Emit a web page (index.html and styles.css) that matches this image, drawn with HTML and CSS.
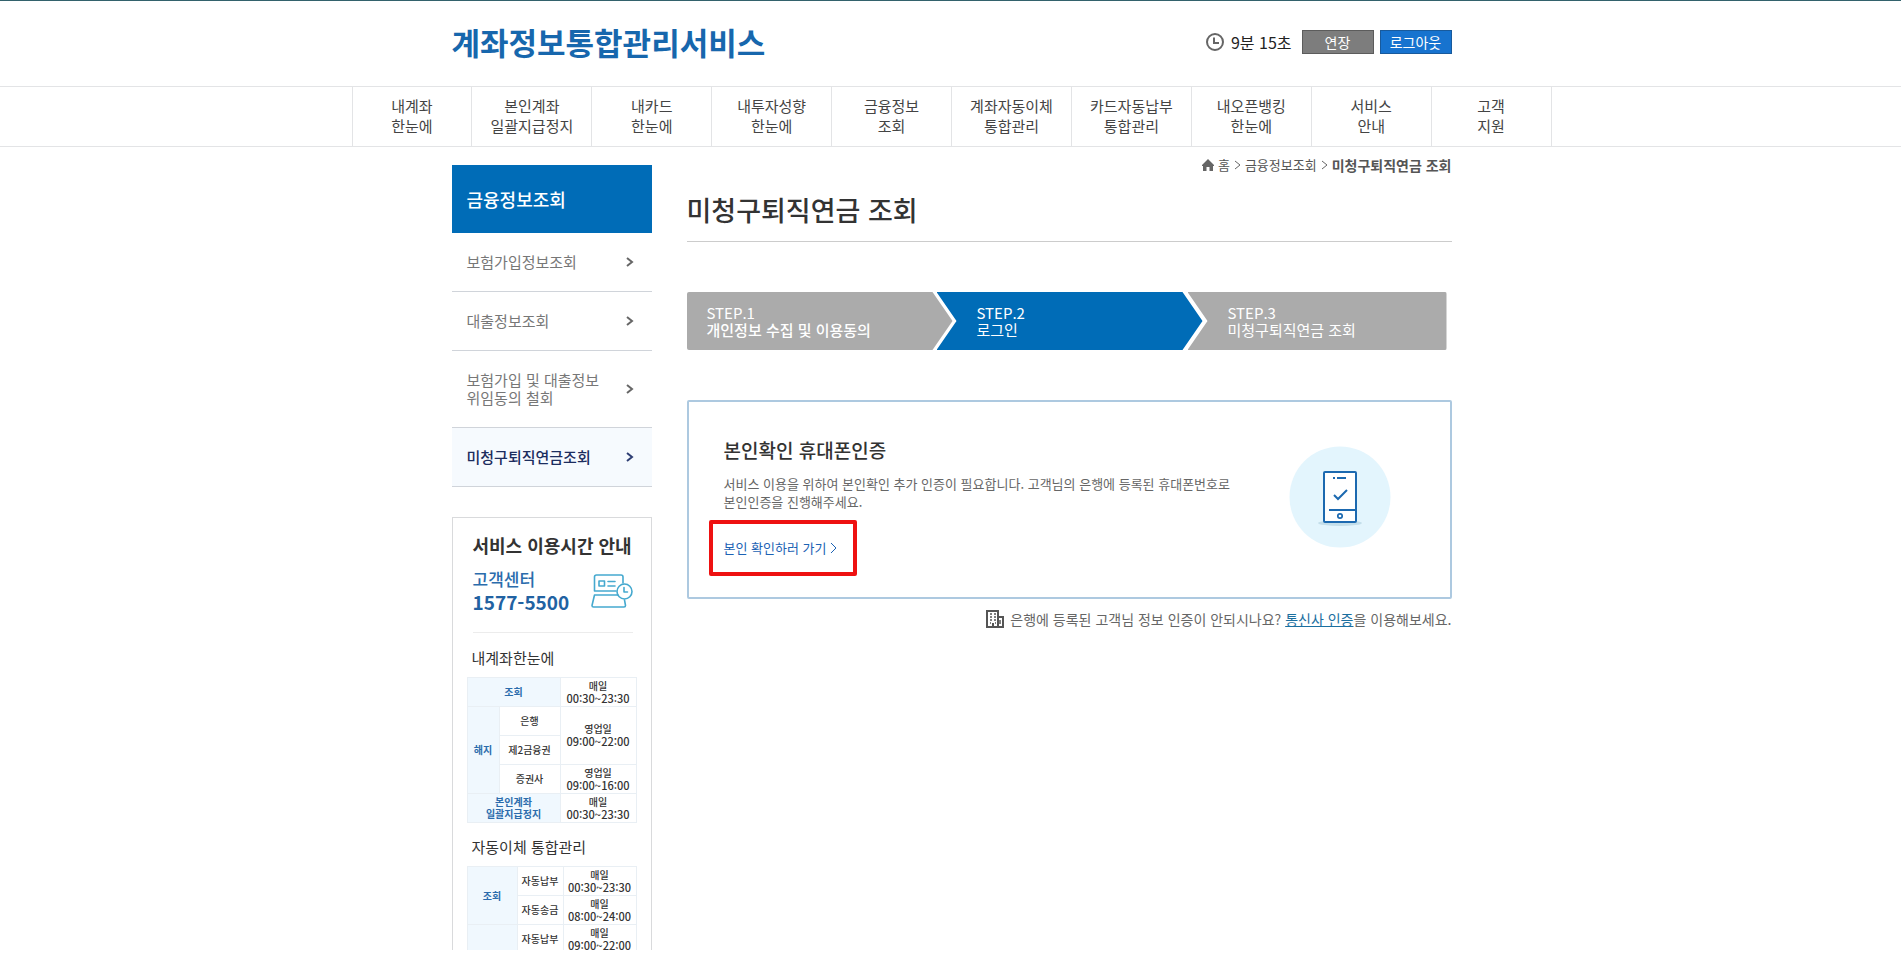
FILE: index.html
```html
<!DOCTYPE html>
<html lang="ko">
<head>
<meta charset="utf-8">
<meta name="viewport" content="width=device-width, initial-scale=1">
<title>미청구퇴직연금 조회</title>
<link rel="stylesheet" href="styles.css">
</head>
<body>
<div class="page">
  <header class="header">
    <div class="wrap header-row">
      <a class="logo" href="#">계좌정보통합관리서비스</a>
      <div class="session">
        <svg class="clock" width="20" height="20" viewBox="0 0 20 20" fill="none" stroke="#666" aria-hidden="true"><circle cx="10" cy="10" r="8" stroke-width="2"/><path d="M9 5.5V11h5" stroke-width="2"/></svg>
        <span class="time">9분 15초</span>
        <button class="btn btn-extend" type="button">연장</button>
        <button class="btn btn-logout" type="button">로그아웃</button>
      </div>
    </div>
  </header>
  <nav class="gnb">
    <ul class="gnb-list">
      <li><a href="#">내계좌<br>한눈에</a></li>
      <li><a href="#">본인계좌<br>일괄지급정지</a></li>
      <li><a href="#">내카드<br>한눈에</a></li>
      <li><a href="#">내투자성향<br>한눈에</a></li>
      <li><a href="#">금융정보<br>조회</a></li>
      <li><a href="#">계좌자동이체<br>통합관리</a></li>
      <li><a href="#">카드자동납부<br>통합관리</a></li>
      <li><a href="#">내오픈뱅킹<br>한눈에</a></li>
      <li><a href="#">서비스<br>안내</a></li>
      <li><a href="#">고객<br>지원</a></li>
    </ul>
  </nav>
  <div class="wrap body-grid">
    <aside class="side">
      <h2 class="side-title">금융정보조회</h2>
      <ul class="side-menu">
        <li><a href="#"><span>보험가입정보조회</span><svg class="arrow" width="8" height="10" viewBox="0 0 8 10"><path d="M1 1l5 4-5 4"/></svg></a></li>
        <li><a href="#"><span>대출정보조회</span><svg class="arrow" width="8" height="10" viewBox="0 0 8 10"><path d="M1 1l5 4-5 4"/></svg></a></li>
        <li><a href="#"><span>보험가입 및 대출정보<br>위임동의 철회</span><svg class="arrow" width="8" height="10" viewBox="0 0 8 10"><path d="M1 1l5 4-5 4"/></svg></a></li>
        <li><a class="current" href="#"><span>미청구퇴직연금조회</span><svg class="arrow" width="8" height="10" viewBox="0 0 8 10"><path d="M1 1l5 4-5 4"/></svg></a></li>
      </ul>
      <section class="hours">
        <h3 class="hours-title">서비스 이용시간 안내</h3>
        <div class="center">
          <div>
            <p class="center-name">고객센터</p>
            <p class="center-tel">1577-5500</p>
          </div>
          <svg width="42" height="34" viewBox="0 0 42 34" fill="none" stroke="#45a9cf" stroke-width="1.6" stroke-linejoin="round" stroke-linecap="round" aria-hidden="true">
            <path d="M3.500 17V3q0-2 2-2H30q2 0 2 2v6M3.500 17H25"/>
            <path d="M8 7h5.500v5H8zM17 7.500h7M17 12h7"/>
            <path d="M3.500 21H27M3.500 21L1 31.500q0 1.500 1.500 1.500H33q1.500 0 1.500-1.500L33.500 26"/>
            <circle cx="33.500" cy="17.500" r="7.500"/><path d="M33 13.500v4.500h3.500"/>
          </svg>
        </div>
        <h4 class="table-title">내계좌한눈에</h4>
        <table class="hours-table">
          <colgroup><col class="c-a"><col class="c-b"><col></colgroup>
          <tr><th colspan="2">조회</th><td>매일<br><span>00:30~23:30</span></td></tr>
          <tr><th rowspan="3">해지</th><td>은행</td><td rowspan="2">영업일<br><span>09:00~22:00</span></td></tr>
          <tr><td>제2금융권</td></tr>
          <tr><td>증권사</td><td>영업일<br><span>09:00~16:00</span></td></tr>
          <tr><th colspan="2">본인계좌<br>일괄지급정지</th><td>매일<br><span>00:30~23:30</span></td></tr>
        </table>
        <h4 class="table-title">자동이체 통합관리</h4>
        <table class="hours-table">
          <colgroup><col class="c-c"><col class="c-d"><col></colgroup>
          <tr><th rowspan="2">조회</th><td>자동납부</td><td>매일<br><span>00:30~23:30</span></td></tr>
          <tr><td>자동송금</td><td>매일<br><span>08:00~24:00</span></td></tr>
          <tr><th></th><td>자동납부</td><td>매일<br><span>09:00~22:00</span></td></tr>
        </table>
      </section>
    </aside>
    <main class="content">
      <div class="crumbs">
        <svg width="12" height="12" viewBox="0 0 12 12" fill="#666" aria-hidden="true"><path d="M6 0l6 6v1h-1v5H7.500V8h-3v4H1V7H0V6z"/></svg>
        <a href="#">홈</a>
        <svg class="sep" width="7" height="10" viewBox="0 0 7 10"><path d="M1 1l5 4-5 4"/></svg>
        <a href="#">금융정보조회</a>
        <svg class="sep" width="7" height="10" viewBox="0 0 7 10"><path d="M1 1l5 4-5 4"/></svg>
        <strong>미청구퇴직연금 조회</strong>
      </div>
      <h1 class="title">미청구퇴직연금 조회</h1>
      <ol class="steps">
        <li class="step first"><span>STEP.1</span><b>개인정보 수집 및 이용동의</b></li>
        <li class="step on"><span>STEP.2</span><span>로그인</span></li>
        <li class="step last"><span>STEP.3</span><span>미청구퇴직연금 조회</span></li>
      </ol>
      <section class="card">
        <div>
          <h2 class="card-title">본인확인 휴대폰인증</h2>
          <p class="card-text">서비스 이용을 위하여 본인확인 추가 인증이 필요합니다. 고객님의 은행에 등록된 휴대폰번호로<br>본인인증을 진행해주세요.</p>
          <a class="go" href="#">본인 확인하러 가기<svg width="7" height="12" viewBox="0 0 7 12"><path d="M1 1l5 5-5 5"/></svg></a>
        </div>
        <svg class="phone" width="102" height="102" viewBox="0 0 102 102" fill="none" aria-hidden="true">
          <circle cx="51" cy="51" r="50.500" fill="#e3f5fd"/>
          <ellipse cx="51" cy="77" rx="22" ry="3" fill="#c3deea"/>
          <rect x="35" y="26" width="32" height="50" rx="1" fill="#fff" stroke="#1b69b0" stroke-width="2"/>
          <path d="M44 32h2M48 32h9M40 64h27" stroke="#1b69b0" stroke-width="2"/>
          <path d="M45 49l4 4 9-9" stroke="#1b69b0" stroke-width="2"/>
          <circle cx="51" cy="70" r="2.200" stroke="#1b69b0" stroke-width="1.700"/>
        </svg>
      </section>
      <p class="note">
        <svg width="18" height="18" viewBox="0 0 18 18" fill="none" stroke="#555" aria-hidden="true"><path d="M1 17V1h11v16M12 7h5v10M0 17h18" stroke-width="2"/><path d="M4 4h2M8 4h2M4 7h2M8 7h2M4 10h2M8 10h2M4 13h1M9 13h1M14 10v4" stroke-width="1.500"/><path d="M7 17v-4" stroke-width="2"/></svg>
        <span>은행에 등록된 고객님 정보 인증이 안되시나요? <a href="#">통신사 인증</a>을 이용해보세요.</span>
      </p>
    </main>
  </div>
</div>
</body>
</html>
```
FILE: styles.css
```css
* { box-sizing: border-box; }
body, h1, h2, h3, h4, p, ul, ol { margin: 0; padding: 0; }
ul, ol { list-style: none; }
a { color: inherit; text-decoration: none; }
body {
  background: #fff;
  color: #444;
  font: 15px/20px "Noto Sans CJK KR", "Noto Sans", sans-serif;
}
svg { flex: none; }

.page {
  height: calc(100vh - 6px);
  overflow: hidden;
  border-top: 1px solid #33626c;
}
.wrap { max-width: 1002px; margin: 0 auto; padding-left: 2px; }

/* header */
.header-row { display: flex; justify-content: space-between; align-items: center; height: 85px; padding-bottom: 3px; }
.logo { color: #1767ad; font-size: 31px; font-weight: 700; line-height: 40px; }
.session { display: flex; align-items: center; }
.clock { margin-right: 6px; }
.time { margin-right: 10px; color: #222; font-size: 16px; }
.btn {
  width: 72px;
  height: 24px;
  padding: 0;
  color: #fff;
  font: inherit;
  font-size: 14px;
  line-height: 20px;
}
.btn-extend { background: #7d7d7d; border: 1px solid #5c5c5c; }
.btn-logout { margin-left: 6px; background: #1773cf; border: 1px solid #185a9c; }

/* global menu */
.gnb { padding-left: 2px; border-top: 1px solid #e3e4e6; border-bottom: 1px solid #e3e4e6; }
.gnb-list {
  display: flex;
  max-width: 1200px;
  margin: 0 auto;
  border-left: 1px solid #e3e4e6;
}
.gnb-list li { flex: 1; border-right: 1px solid #e3e4e6; }
.gnb-list a { display: block; padding: 9px 0 10px; text-align: center; }

/* columns */
.body-grid { display: grid; grid-template-columns: 200px 1fr; gap: 35px; padding-top: 8px; }
.side { padding-top: 10px; }
.side-title {
  padding: 0 15px;
  background: #006cb7;
  color: #fff;
  font-size: 18px;
  font-weight: 500;
  line-height: 68px;
}
.side-menu li { border-bottom: 1px solid #d0d4da; }
.side-menu a {
  display: flex;
  justify-content: space-between;
  align-items: center;
  padding: 20px 18px 20px 15px;
  color: #777;
  line-height: 18px;
}
.side-menu .current { background: #f6fafe; color: #1c2d5e; font-weight: 500; }
.arrow { fill: none; stroke: #666; stroke-width: 2; }
.current .arrow { stroke: #2d3d73; }

/* service hours */
.hours { margin-top: 30px; padding: 15px 14px; border: 1px solid #d9dadc; }
.hours-title { color: #333; font-size: 18px; line-height: 24px; padding-left: 6px; white-space: nowrap; }
.center {
  display: flex;
  justify-content: space-between;
  align-items: center;
  margin: 11px 4px 15px 6px;
  padding-bottom: 18px;
  border-bottom: 1px solid #ececec;
}
.center-name { color: #2b6cac; font-size: 17px; font-weight: 500; line-height: 22px; }
.center-tel { color: #2162a2; font-size: 19px; font-weight: 700; line-height: 24px; }
.table-title { padding: 0 5px; color: #333; font-size: 15px; font-weight: 400; line-height: 20px; }
.hours-table {
  width: 100%;
  margin: 9px 0 14px;
  table-layout: fixed;
  border-collapse: collapse;
  color: #333;
  font-size: 10px;
  font-weight: 500;
  line-height: 12px;
  text-align: center;
}
.hours-table th, .hours-table td { height: 29px; padding: 0; border: 1px solid #e9eff4; }
.hours-table th { background: #f0f8fe; color: #2b6cac; font-weight: 700; }
.hours-table td span { font-size: 11px; }
.c-a { width: 32px; }
.c-b { width: 61px; }
.c-c { width: 50px; }
.c-d { width: 46px; }

/* content */
.crumbs { display: flex; justify-content: flex-end; align-items: center; gap: 4px; color: #555; font-size: 13px; }
.crumbs strong { font-size: 14px; }
.sep { fill: none; stroke: #666; }
.title {
  margin-top: 15px;
  padding-bottom: 11px;
  border-bottom: 1px solid #ccc;
  color: #333;
  font-size: 27px;
  font-weight: 500;
  line-height: 40px;
}
.steps { display: grid; grid-template-columns: 250fr 251fr 259fr; margin: 50px 5px 50px 0; color: #fff; }
.step {
  display: flex;
  flex-direction: column;
  padding: 12px 0 12px 40px;
  background: #ababab;
  line-height: 17px;
}
.first {
  margin-right: -16px;
  padding-left: 20px;
  border-radius: 2px 0 0 2px;
  clip-path: polygon(0 0, calc(100% - 20px) 0, 100% 50%, calc(100% - 20px) 100%, 0 100%);
}
.step b { font-weight: 500; }
.on {
  margin-right: -15px;
  background: #006cb7;
  clip-path: polygon(0 0, calc(100% - 20px) 0, 100% 50%, calc(100% - 20px) 100%, 0 100%, 20px 50%);
}
.last {
  border-radius: 0 2px 2px 0;
  clip-path: polygon(0 0, 100% 0, 100% 100%, 0 100%, 20px 50%);
}
.card {
  display: flex;
  justify-content: space-between;
  align-items: center;
  padding: 34px 59px 40px 35px;
  border: 2px solid #adc9e0;
  border-radius: 2px;
}
.card-title { color: #333; font-size: 19px; font-weight: 500; line-height: 28px; }
.card-text { margin: 11px 0 28px; color: #666; font-size: 13px; line-height: 18px; }
.go {
  display: flex;
  position: relative;
  align-items: center;
  gap: 4px;
  width: fit-content;
  color: #1c62b4;
  font-size: 13px;
  line-height: 18px;
}
.go svg { fill: none; stroke: #1c62b4; }
.go::after {
  content: "";
  position: absolute;
  inset: -19px -20px -19px -15px;
  border: 4px solid #ee1111;
  border-radius: 2px;
}
.note {
  display: flex;
  justify-content: flex-end;
  align-items: center;
  gap: 6px;
  margin-top: 10px;
  color: #666;
  font-size: 14px;
}
.note a { color: #1b6f9f; text-decoration: underline; }
```
